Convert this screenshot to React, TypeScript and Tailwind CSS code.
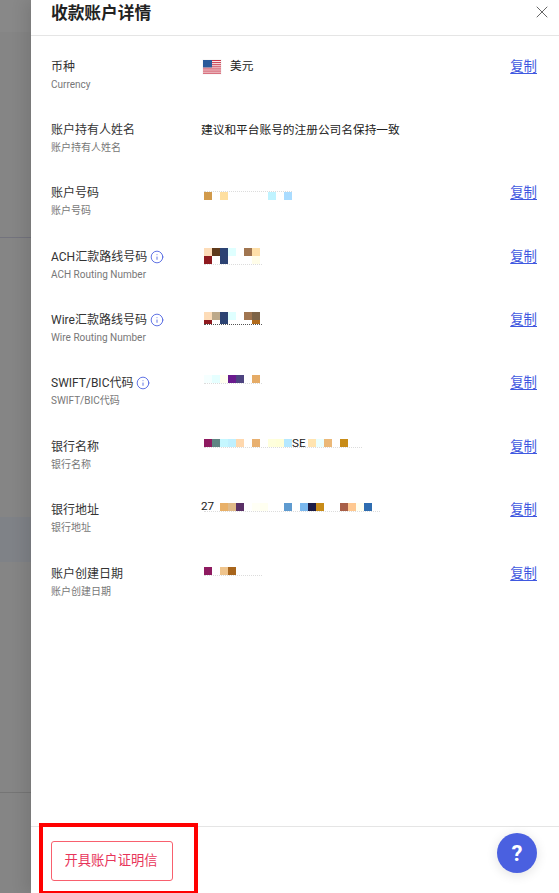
import { Info, X } from "lucide-react";

type Cell = string;

interface Row {
  label: string;
  sub: string;
  info?: boolean;
  copy?: boolean;
  text?: string;
  blurTop?: string;
  lines?: Cell[][];
  specks?: number;
  specksClass?: string;
  specksFirst?: boolean;
  short?: boolean;
}

// blurred values: each string is one 8px mosaic block, "" leaves a gap
const rows: Row[] = [
  { label: "账户持有人姓名", sub: "账户持有人姓名", text: "建议和平台账号的注册公司名保持一致" },
  {
    label: "账户号码",
    sub: "账户号码",
    copy: true,
    blurTop: "mt-[7.5px]",
    specks: 88,
    specksFirst: true,
    lines: [["bg-[#d19a4b]", "", "bg-[#fedfa0]", "", "", "", "", "", "bg-[#bff3ff]", "", "bg-[#aadcff]"]],
  },
  {
    label: "ACH汇款路线号码",
    sub: "ACH Routing Number",
    info: true,
    copy: true,
    blurTop: "mt-[1.5px]",
    specks: 58,
    lines: [
      ["bg-[#fddcb8]", "bg-[#5e3a1c]", "bg-[#2c4373]", "bg-[#dfffff]", "", "bg-[#a07550]", "bg-[#fedfa8]"],
      ["bg-[#8e1a1f]", "", "bg-[#2c4373]", "", "", "", "bg-[#fffde8]"],
    ],
  },
  {
    label: "Wire汇款路线号码",
    sub: "Wire Routing Number",
    info: true,
    copy: true,
    blurTop: "mt-[1.5px]",
    specks: 58,
    specksClass: "border-[#555]",
    short: true,
    lines: [
      ["bg-[#fddcb8]", "bg-[#bda98a]", "bg-[#2c4373]", "bg-[#dfffff]", "", "bg-[#a07550]", "bg-[#7c6347]"],
      ["bg-[#8e1a1f]", "", "bg-[#2c4373]", "", "", "", "bg-[#b06a1c]"],
    ],
  },
  {
    label: "SWIFT/BIC代码",
    sub: "SWIFT/BIC代码",
    info: true,
    copy: true,
    blurTop: "mt-[1.5px]",
    specks: 58,
    lines: [["bg-[#f5ffff]", "bg-[#e5ffff]", "bg-[#fffff0]", "bg-[#6a1b8e]", "bg-[#4d4480]", "", "bg-[#e5ab66]"]],
  },
  {
    label: "银行名称",
    sub: "银行名称",
    copy: true,
    blurTop: "mt-[2.5px]",
    specks: 158,
    lines: [
      [
        "bg-[#8e1a60]", "bg-[#5f8583]", "bg-[#c5f7ff]", "bg-[#bff0ff]", "bg-[#ffd8ae]", "", "bg-[#e8b070]", "",
        "bg-[#ffffdc]", "bg-[#ffffd8]", "bg-[#b5e8ff]", "SE", "bg-[#ffe4b0]", "bg-[#eaffff]", "bg-[#ebb878]", "", "bg-[#c88c18]",
      ],
    ],
  },
  {
    label: "银行地址",
    sub: "银行地址",
    copy: true,
    blurTop: "mt-[2.5px]",
    specks: 176,
    lines: [
      [
        "27", "bg-[#e8b068]", "bg-[#e0ba88]", "bg-[#5a3066]", "", "bg-[#fffff5]", "bg-[#fffff0]", "", "",
        "bg-[#5f9bd0]", "", "bg-[#7ab8ee]", "bg-[#1c1c46]", "bg-[#c88c18]", "", "", "bg-[#a85f48]", "bg-[#ffc890]", "bg-[#fffff0]", "bg-[#2f6db0]",
      ],
    ],
  },
  {
    label: "账户创建日期",
    sub: "账户创建日期",
    copy: true,
    blurTop: "mt-[3.5px]",
    specks: 58,
    lines: [["bg-[#8e1a60]", "", "bg-[#efc48c]", "bg-[#a8651c]"]],
  },
];

function Mosaic({ row, className }: { row: Row; className?: string }) {
  const specks = (
    <div
      className={`border-t border-dotted ${row.specksClass ?? "border-[#dcdcdc]"}`}
      style={{ width: row.specks }}
    />
  );
  return (
    <div className={`flex flex-col ${className ?? ""}`}>
      {row.specksFirst && specks}
      {row.lines?.map((line, i) => (
        <div key={i} className={`flex items-center overflow-visible ${row.short && i === 1 ? "h-1" : "h-2"}`}>
          {line.map((cell, j) =>
            cell === "SE" ? (
              <span key={j} className="w-[16px] text-[11.7px] text-[#222]">SE</span>
            ) : cell === "27" ? (
              <span key={j} className="-ml-[3px] w-[19px] text-[11.7px] text-[#222]">27</span>
            ) : (
              <span key={j} className={`h-full w-2 shrink-0 ${cell}`} />
            ),
          )}
        </div>
      ))}
      {!row.specksFirst && specks}
    </div>
  );
}

function UsFlag() {
  return (
    <svg width="20" height="16" viewBox="0 0 20 16" className="shrink-0">
      <rect x="0.25" y="0.25" width="19.5" height="15.5" rx="1.5" fill="#fff" stroke="#eee" strokeWidth="0.5" />
      {[1, 3.1, 5.2, 7.3, 9.4, 11.5, 13.6].map((y) => (
        <rect key={y} x="1" y={y} width="18" height="1.1" fill="#c8374a" />
      ))}
      <rect x="1" y="1" width="9" height="7.4" fill="#2a5a9a" />
    </svg>
  );
}

function Copy() {
  return <a className="text-[13.4px] leading-5 text-[#3f58e0] underline underline-offset-2">复制</a>;
}

function DetailRow({ row }: { row: Row }) {
  return (
    <div className="flex h-[63.4px] items-start">
      <div className="w-[150px] shrink-0">
        <div className="flex h-5 items-center gap-[3px] text-[12px] text-[#333]">
          {row.label}
          {row.info && <Info size={14} strokeWidth={1.5} className="text-[#4a60e0]" />}
        </div>
        <div className="mt-[1px] text-[10px] leading-[14px] text-[#777]">{row.sub}</div>
      </div>
      <div className="flex-1">
        {row.text && <div className="text-[11.7px] leading-5 text-[#222]">{row.text}</div>}
        {row.lines && <Mosaic row={row} className={`ml-[3px] ${row.blurTop ?? ""}`} />}
      </div>
      {row.copy && <Copy />}
    </div>
  );
}

export default function App() {
  return (
    <div
      className="relative flex h-[893px] w-[559px] overflow-hidden bg-white"
      style={{ fontFamily: 'Roboto, "Noto Sans CJK SC", sans-serif' }}
    >
      {/* page behind the overlay */}
      <div className="flex w-[31px] shrink-0 flex-col bg-[#858585]">
        <div className="h-[32px] bg-[#888888]" />
        <div className="h-[206px] border-b border-[#73737d]" />
        <div className="h-[279px]" />
        <div className="h-[45px] bg-[#7f8287]" />
        <div className="h-[231px] border-b border-[#757575]" />
      </div>

      <div className="relative flex flex-1 flex-col bg-white shadow-[-6px_0_14px_rgba(0,0,0,0.1)]">
        <div className="flex h-[36px] items-start justify-between border-b border-[#e5e5e5] pr-[7px] pl-5">
          <h2 className="text-[16.7px] leading-[27px] font-bold text-[#222]">收款账户详情</h2>
          <X size={20} strokeWidth={1.2} className="mt-[2px] text-[#666]" />
        </div>

        <div className="flex-1 pt-[20.5px] pr-[22px] pl-5">
          <div className="flex h-[63.4px] items-start">
            <div className="w-[150px] shrink-0">
              <div className="flex h-5 items-center text-[12px] text-[#333]">币种</div>
              <div className="mt-[1px] text-[10px] leading-[14px] text-[#777]">Currency</div>
            </div>
            <div className="flex h-5 flex-1 items-center gap-2 pl-[1px] text-[11.7px] text-[#222]">
              <UsFlag />
              美元
            </div>
            <Copy />
          </div>
          {rows.map((row) => (
            <DetailRow key={row.label} row={row} />
          ))}
        </div>

        <div className="flex h-[67px] items-start border-t border-[#e5e5e5] pt-[14px] pl-5">
          <button className="h-10 w-[122px] rounded-[3px] border border-[#f8606e] pr-[2px] text-[13.3px] text-[#e8345a]">
            开具账户证明信
          </button>
        </div>
      </div>

      {/* help bubble */}
      <button className="absolute top-[833px] left-[497px] flex h-10 w-10 items-center justify-center rounded-full bg-[#4a60e0] text-[22px] font-bold text-white shadow-[0_2px_12px_rgba(0,0,0,0.12)]">
        ?
      </button>

      {/* annotation drawn over the screenshot */}
      <div className="absolute top-[823px] left-[39px] h-[72px] w-[159px] border-4 border-[#ff0000]" />
    </div>
  );
}
